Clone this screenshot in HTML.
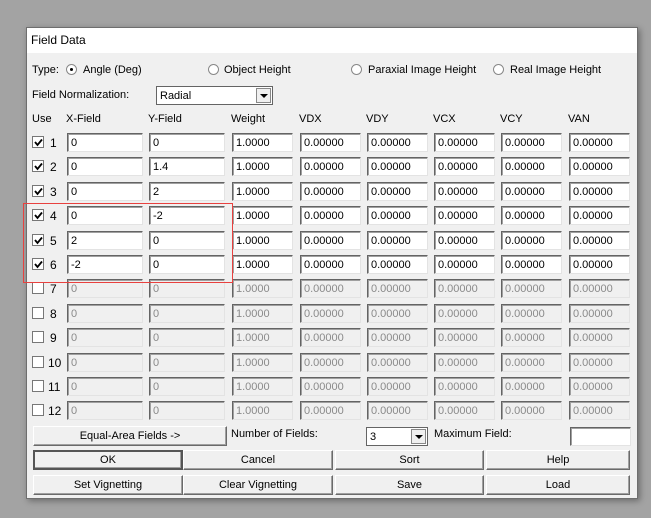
<!DOCTYPE html>
<html><head><style>
*{box-sizing:border-box}
body{margin:0;width:651px;height:518px;background:#a3a3a3;font-family:"Liberation Sans",Arial,sans-serif;font-size:11px;color:#000;position:relative;overflow:hidden}
.dlg{position:absolute;left:26px;top:27px;width:612px;height:472px;background:#f0f0f0;border:1px solid #6e6e6e;box-shadow:2px 2px 6px rgba(0,0,0,.35)}
.title{position:absolute;left:0;top:0;width:610px;height:25px;background:#fff;font-size:12px;padding:5px 0 0 4px}
.a{position:absolute;white-space:nowrap}
.in{position:absolute;height:19px;background:#fff;border-top:1px solid #646464;border-left:1px solid #646464;border-right:1px solid #e3e3e3;border-bottom:1px solid #e3e3e3;box-shadow:inset 1px 1px 0 #a0a0a0;padding:3px 0 0 3px;white-space:nowrap;overflow:hidden}
.in.d{background:#f0f0f0;color:#8a8a8a}
.cb{position:absolute;width:12px;height:12px;border:1px solid #777;background:#fff}
.cb svg{position:absolute;left:1px;top:1px}
.btn{position:absolute;height:20px;background:#f0f0f0;border:1px solid;border-color:#fff #6a6a6a #6a6a6a #fff;box-shadow:inset -1px -1px 0 #a0a0a0;text-align:center;padding-top:3px}
.btn.def{border:2px solid #555;padding-top:2px}
.rad{position:absolute;width:11px;height:11px;border-radius:50%;border:1px solid #888;background:#fff}
.sel{position:absolute;height:19px;background:#fff;border:1px solid #646464;padding:3px 0 0 3px}
.sel .ar{position:absolute;right:1px;top:1px;width:15px;height:15px;background:#f0f0f0;border:1px solid #888}
.sel .ar:after{content:"";position:absolute;left:3px;top:5px;border-left:4px solid transparent;border-right:4px solid transparent;border-top:4px solid #000}
</style></head><body>
<div class="dlg"><div class="title">Field Data</div></div>
<div id="c"></div>
<script>
var h='';
function a(x,y,t,s){h+='<div class="a" style="left:'+x+'px;top:'+y+'px;'+(s||'')+'">'+t+'</div>';}
a(32,64,'Type:');
h+='<div class="rad" style="left:66px;top:64px"><div style="position:absolute;left:3px;top:3px;width:3px;height:3px;background:#000;border-radius:50%"></div></div>';
a(83,64,'Angle (Deg)');
h+='<div class="rad" style="left:208px;top:64px"></div>';a(224,64,'Object Height');
h+='<div class="rad" style="left:351px;top:64px"></div>';a(368,64,'Paraxial Image Height');
h+='<div class="rad" style="left:493px;top:64px"></div>';a(510,64,'Real Image Height');
a(32,89,'Field Normalization:');
h+='<div class="sel" style="left:156px;top:86px;width:117px">Radial<div class="ar"></div></div>';
var cx=[67,149,232,300,367,434,501,569],cw=[76,76,61,61,61,61,61,61];
var hd=['X-Field','Y-Field','Weight','VDX','VDY','VCX','VCY','VAN'];
a(32,113,'Use');
for(var i=0;i<8;i++)a(cx[i]-1,113,hd[i]);
var xv=['0','0','0','0','2','-2'],yv=['0','1.4','2','-2','0','0'];
for(var r=0;r<12;r++){
 var y=133+Math.round(r*24.4),en=r<6;
 h+='<div class="cb" style="left:32px;top:'+(y+3)+'px">'+(en?'<svg width="9" height="9"><path d="M1 4 L3.5 7 L8 1.5" stroke="#000" stroke-width="1.8" fill="none"/></svg>':'')+'</div>';
 a(r>=9?48:50,y+3,String(r+1),'font-size:12px');
 var v=[en?xv[r]:'0',en?yv[r]:'0','1.0000','0.00000','0.00000','0.00000','0.00000','0.00000'];
 for(var i=0;i<8;i++)h+='<div class="in'+(en?'':' d')+'" style="left:'+cx[i]+'px;top:'+y+'px;width:'+cw[i]+'px">'+v[i]+'</div>';
}
h+='<div style="position:absolute;left:23px;top:203px;width:210px;height:80px;border:1px solid #e8413f"></div>';
h+='<div class="btn" style="left:33px;top:426px;width:194px">Equal-Area Fields -&gt;</div>';
a(231,428,'Number of Fields:');
h+='<div class="sel" style="left:366px;top:427px;width:62px">3<div class="ar"></div></div>';
a(434,428,'Maximum Field:');
h+='<div class="in" style="left:570px;top:427px;width:61px"></div>';
var bx=[33,183,335,486],bw=[150,150,149,144];
var b1=['OK','Cancel','Sort','Help'],b2=['Set Vignetting','Clear Vignetting','Save','Load'];
for(var i=0;i<4;i++){h+='<div class="btn'+(i==0?' def':'')+'" style="left:'+bx[i]+'px;top:450px;width:'+bw[i]+'px">'+b1[i]+'</div>';
h+='<div class="btn" style="left:'+bx[i]+'px;top:475px;width:'+bw[i]+'px">'+b2[i]+'</div>';}
document.getElementById('c').innerHTML=h;
</script>
</body></html>
